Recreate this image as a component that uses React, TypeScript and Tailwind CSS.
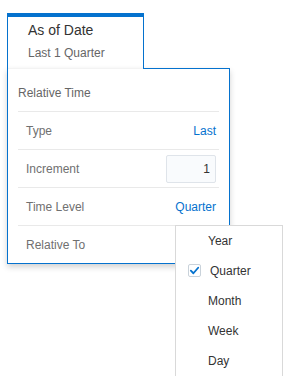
import * as React from 'react';

const BLUE = '#0572ce';

const levels = ['Year', 'Quarter', 'Month', 'Week', 'Day'];

const Row = ({ label, children }: { label: string; children: React.ReactNode }) => (
  <div className="flex h-[38px] items-center justify-between border-t border-[#e9e9e9] pl-[8px] pr-[3px]">
    <span className="text-[12px] text-[#707070]">{label}</span>
    {children}
  </div>
);

export default function App() {
  const selected = 'Quarter';

  return (
    <div
      className="relative h-[383px] w-[291px] bg-white pl-[7px] pt-[13px]"
      style={{ fontFamily: '"Liberation Sans", Arial, sans-serif' }}
    >
      {/* tab */}
      <div className="h-[55px] w-[137px] border-x border-t-4 border-[#0572ce] pl-[20px] pt-[5px]">
        <p className="text-[14px] leading-[16px] text-[#333]">As of Date</p>
        <p className="mt-[8px] text-[12px] leading-[14px] text-[#666]">Last 1 Quarter</p>
      </div>

      {/* panel */}
      <div className="w-[223px] border-x border-b border-[#0572ce] bg-white shadow-[0_3px_6px_rgba(0,0,0,0.18)]">
        <div className="flex h-px">
          <div className="w-[135px] bg-[#f3f3f3]" />
          <div className="flex-1 bg-[#0572ce]" />
        </div>
        <div className="pl-[10px] pr-[10px]">
          <div className="flex h-[42px] items-center pt-[5px] text-[12px] text-[#666]">Relative Time</div>
          <Row label="Type">
            <span className="text-[12px]" style={{ color: BLUE }}>Last</span>
          </Row>
          <Row label="Increment">
            <div className="flex h-[28px] w-[50px] items-center justify-end rounded-[2px] border border-[#dfe4ea] bg-[#f9fbfd] pr-[5px] text-[12px] text-[#333]">
              1
            </div>
          </Row>
          <Row label="Time Level">
            <span className="text-[12px]" style={{ color: BLUE }}>Quarter</span>
          </Row>
          <Row label="Relative To">
            <span />
          </Row>
        </div>
      </div>

      {/* dropdown menu */}
      <ul className="absolute left-[175px] top-[225px] w-[108px] border-x border-t border-[#d9d9d9] bg-white pb-[0px]">
        {levels.map((lvl) => (
          <li key={lvl} className="relative flex h-[30px] items-center pl-[32px] text-[12px] text-[#333]">
            {lvl === selected ? (
              <span className="absolute left-[12px] top-[8px] flex h-[13px] w-[13px] items-center justify-center rounded-[2px] border border-[#c9d2da] bg-white">
                <svg width="11" height="11" viewBox="0 0 12 12" fill="none">
                  <path d="M2 6.2 L4.8 9 L10 3" stroke={BLUE} strokeWidth="2" strokeLinecap="round" strokeLinejoin="round" />
                </svg>
              </span>
            ) : null}
            <span className={lvl === selected ? 'ml-[2px]' : ''}>{lvl}</span>
          </li>
        ))}
      </ul>
    </div>
  );
}
